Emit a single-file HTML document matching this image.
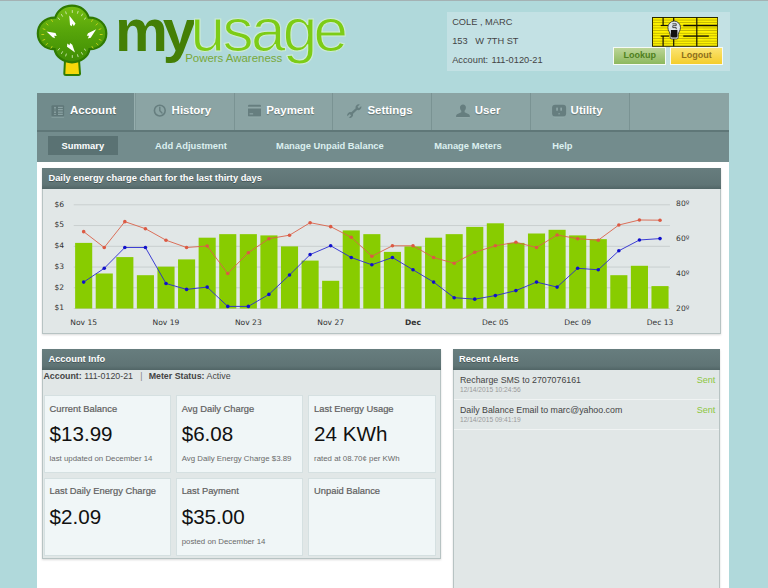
<!DOCTYPE html>
<html><head><meta charset="utf-8"><title>MyUsage</title>
<style>
*{box-sizing:border-box;margin:0;padding:0}
html,body{width:768px;height:588px;overflow:hidden}
body{background:#b0d9db;font-family:"Liberation Sans",Arial,sans-serif;color:#333;position:relative}
.abs{position:absolute}
#topbar{left:0;top:0;width:768px;height:1px;background:#a4b2b4}
#info{left:446.6px;top:11.8px;width:283px;height:59.7px;background:#c3e1e4}
#info div{position:absolute;left:5.6px;font-size:9.25px;color:#444;white-space:pre;line-height:12px}
.btn{position:absolute;top:47.4px;height:18.1px;border:1.5px solid #f6faf6;font-size:9px;font-weight:bold;text-align:center;line-height:15.2px}
#nav{left:37.3px;top:93.3px;width:691.9px;height:36.9px;background:#8ba4a4}
.tab{position:absolute;top:0;height:36.9px;border-right:1px solid #7a9393;color:#fff;font-weight:bold;font-size:11.5px;line-height:35.4px;text-shadow:0 1px 1px rgba(0,0,0,.3)}
.tab span{position:absolute;top:0}
.tab svg{position:absolute}
#sub{left:37.3px;top:130.2px;width:691.9px;height:31.5px;background:#738c8d;border-top:2px solid #5f7778}
#sub span{position:absolute;top:3.8px;height:19.5px;line-height:21px;font-size:9.37px;font-weight:bold;color:#dcf0f0;white-space:nowrap}
#main{left:37.3px;top:161.7px;width:691.9px;height:440px;background:#fff}
.panel{position:absolute;background:#e1e7e7;border:1px solid #b7c3c3;box-shadow:0 1px 2px rgba(0,0,0,.15)}
.ph{position:absolute;left:-1px;top:-1px;right:-1px;height:21.3px;background:linear-gradient(#677d7e,#5f7475 80%,#516566);color:#fff;font-size:9.3px;font-weight:bold;line-height:20.5px;padding-left:6px;text-shadow:0 1px 0 rgba(0,0,0,.3);white-space:nowrap}
.card{position:absolute;background:#f0f6f7;border:1px solid #d5e0e1;width:127.3px;height:77.6px}
.card .t{position:absolute;left:4.8px;top:7.5px;font-size:9.35px;color:#606060;-webkit-text-stroke:0.2px #606060;white-space:nowrap}
.card .v{position:absolute;left:4.8px;top:26px;font-size:20.6px;color:#111;white-space:nowrap;line-height:24px}
.card .s{position:absolute;left:4.8px;top:58.2px;font-size:7.85px;color:#6a6a6a;white-space:nowrap}
.al{position:absolute;left:0;right:0;height:30px;border-bottom:1px solid rgba(255,255,255,.5)}
.al .a{position:absolute;left:6px;top:5.5px;font-size:8.82px;color:#444;white-space:nowrap;line-height:11px}
.al .d{position:absolute;left:6px;top:16px;font-size:6.62px;color:#999;white-space:nowrap;line-height:8px}
.al .r{position:absolute;right:4px;top:5.5px;font-size:9px;color:#8cc63e;line-height:11px}
</style></head><body>
<div class="abs" id="topbar"></div>
<svg class="abs" style="left:0;top:0" width="400" height="90" viewBox="0 0 400 90">
<defs>
<linearGradient id="tg" x1="0" y1="0" x2="0" y2="1"><stop offset="0" stop-color="#74bd12"/><stop offset="0.45" stop-color="#57a50a"/><stop offset="1" stop-color="#3f8d04"/></linearGradient>
</defs>
<g>
<path d="M65 60 L64.3 73.5 Q64.3 75 66 75 L78.5 75 Q80.2 75 80 73.5 L79 60 Z" fill="#f6d80a" stroke="#327c02" stroke-width="2" stroke-linejoin="round"/>
<g fill="url(#tg)" stroke="#2f7a02" stroke-width="2.2">
<path d="M72 5.6 C80.5 5.6 87 11 88.6 17.6 C99 17.2 106.3 24.5 106.3 33.5 C106.300 43 98.500 49.500 89.500 49.200 C88.500 56.500 81 62.300 72 62.300 C63 62.300 55.800 56.500 54.600 49.200 C45.500 49.500 37.800 43 37.800 33.500 C37.800 24.500 45 17.200 55.400 17.600 C57 11 63.500 5.600 72 5.600 Z"/>
</g>
<g stroke="#e6f3d2" stroke-width="0.9" stroke-linecap="round" opacity="0.85">
<path d="M59.5 19.5l-1.3-1.6M62.500 16.300l-1-1.800M66.300 13.800l-.6-2M72.300 12.500v-2M77.500 13.300l.6-2M81.500 15.800l1-1.800M84.300 19.300l1.500-1.400"/>
<path d="M59.5 48.500l-1.300 1.600M62.500 51.700l-1 1.800M66.300 54l-.6 2M72.300 55.500v2M77.500 54.700l.6 2M81.500 52.500l1 1.800M84.300 49l1.500 1.400"/>
</g>
<g stroke="#e2dc20" stroke-width="0.9" stroke-linecap="round" opacity="0.85">
<path d="M52.500 21.500l-1.200-1.800M48 25l-1.500-1.300M45 29.500l-1.900-.7M43.800 34.500h-2M44.800 39.500l-1.900.7M47.500 43.500l-1.500 1.300M52 46.500l-1 1.700"/>
<path d="M91.500 21.500l1.200-1.800M96 25l1.500-1.300M99 29.500l1.900-.7M100.200 34.500h2M99.200 39.500l1.900.7M96.500 43.500l1.500 1.300M92 46.500l1 1.700"/>
</g>
<g fill="#fff">
<path d="M69.300 15.500 L75.500 23.500 L73.800 26.200 L72.600 23.800 L71.600 26.200 L70 25 Z"/>
<path d="M46.500 31.500 L55.500 33 L56.700 36 L54.200 35.800 L55 38.200 L52.500 37.200 Z"/>
<path d="M96.200 29.300 L90.700 37.800 L87.800 38.500 L89 35.800 L86.800 35.800 L88 33.300 Z"/>
<path d="M75 52.500 L67 46.800 L67.300 43.500 L69.500 45.300 L70 43 L72.300 44.800 Z"/>
</g>
</g>
<text x="114.9" y="50.6" font-family="'Liberation Sans',Arial,sans-serif" font-weight="bold" font-size="59.5" fill="#447f06" letter-spacing="-5">my</text>
<text x="190.6" y="51" font-family="'Liberation Sans',Arial,sans-serif" font-size="62" fill="#7dcc16" stroke="#cdebd6" stroke-width="1.1" paint-order="fill" letter-spacing="-2.6" dx="0 0 0 0 -1.2">usage</text>
<text x="185.2" y="61.6" font-family="'Liberation Sans',Arial,sans-serif" font-size="11" fill="#78a83a" textLength="97" lengthAdjust="spacingAndGlyphs">Powers Awareness</text>
</svg>

<div class="abs" id="info">
<div style="top:4px">COLE , MARC</div>
<div style="top:23px">153   W 7TH ST</div>
<div style="top:42px;word-spacing:0.7px">Account: 111-0120-21</div>
</div>
<svg class="abs" style="left:651.8px;top:17px" width="66.2" height="29.8" viewBox="0 0 66.2 29.8">
<rect x="0.5" y="0.5" width="65.2" height="28.8" fill="#f9ee00" stroke="#2a2800" stroke-width="1"/>
<text x="1" y="27.5" font-family="'Liberation Sans',Arial,sans-serif" font-weight="bold" font-size="36" fill="#fff400" textLength="64" lengthAdjust="spacingAndGlyphs">KES</text>
<rect x="0.8" y="2.69" width="64.60000000000001" height="0.7" fill="#9c9000" opacity="0.8"/>
<rect x="0.8" y="5.32" width="64.60000000000001" height="0.7" fill="#9c9000" opacity="0.8"/>
<rect x="0.8" y="7.96" width="64.60000000000001" height="0.7" fill="#9c9000" opacity="0.8"/>
<rect x="0.8" y="10.60" width="64.60000000000001" height="0.7" fill="#9c9000" opacity="0.8"/>
<rect x="0.8" y="13.23" width="64.60000000000001" height="0.7" fill="#9c9000" opacity="0.8"/>
<rect x="0.8" y="15.87" width="64.60000000000001" height="0.7" fill="#9c9000" opacity="0.8"/>
<rect x="0.8" y="18.50" width="64.60000000000001" height="0.7" fill="#9c9000" opacity="0.8"/>
<rect x="0.8" y="21.14" width="64.60000000000001" height="0.7" fill="#9c9000" opacity="0.8"/>
<rect x="0.8" y="23.78" width="64.60000000000001" height="0.7" fill="#9c9000" opacity="0.8"/>
<rect x="0.8" y="26.41" width="64.60000000000001" height="0.7" fill="#9c9000" opacity="0.8"/>
<line x1="11.1" y1="0.5" x2="11.1" y2="8.5" stroke="#141200" stroke-width="1.2"/>
<line x1="11.1" y1="19.1" x2="11.1" y2="29.3" stroke="#141200" stroke-width="1.2"/>
<line x1="8.7" y1="8.5" x2="16" y2="8.5" stroke="#141200" stroke-width="1.2"/>
<line x1="8.7" y1="19.1" x2="17" y2="19.1" stroke="#141200" stroke-width="1.2"/>
<line x1="21.7" y1="0.5" x2="21.7" y2="4.6" stroke="#141200" stroke-width="1.2"/>
<line x1="21.7" y1="21.5" x2="21.7" y2="29.3" stroke="#141200" stroke-width="1.2"/>
<line x1="31.3" y1="8.5" x2="65.5" y2="8.5" stroke="#141200" stroke-width="1.3"/>
<line x1="31.3" y1="19.1" x2="56.8" y2="19.1" stroke="#141200" stroke-width="1.3"/>
<line x1="44.8" y1="0.5" x2="44.8" y2="29.3" stroke="#141200" stroke-width="1.2"/>
<path d="M22.200 4.100a6.300 6.300 0 0 1 6.300 6.300c0 3.200-2 4.500-2.300 7.500v2.500q0 1.600-1.600 1.600h-4.800q-1.600 0-1.600-1.600v-2.500c-.3-3-2.300-4.300-2.300-7.500a6.300 6.300 0 0 1 6.300-6.300z" fill="#dde5ea" stroke="#2a2a2a" stroke-width="0.8"/>
<path d="M18.900 12.900h6.500v6q0 1.700-1.600 1.700h-3.300q-1.600 0-1.600-1.700z" fill="#111"/>
<path d="M20.400 6.800h3.800v1.900h-3.400v1.900h3.400v1.600" fill="none" stroke="#222" stroke-width="0.8"/>
</svg>
<div class="btn" style="left:613.2px;width:53.3px;background:linear-gradient(#bcd597,#8db85e);color:#4f8020">Lookup</div>
<div class="btn" style="left:669.6px;width:53.6px;background:linear-gradient(#fbe472,#f4cd2c);color:#8d6f1c">Logout</div>
<div class="abs" id="nav">
 <div class="tab" style="left:0;width:98px;background:#718b8c;border-right:1.2px solid #96aeae"><span style="left:32.7px">Account</span></div>
 <div class="tab" style="left:98px;width:99.7px;border-left:1px solid #7f9898"><span style="left:35.3px">History</span></div>
 <div class="tab" style="left:197.7px;width:98.1px"><span style="left:31.2px">Payment</span></div>
 <div class="tab" style="left:295.8px;width:98.7px"><span style="left:34.3px">Settings</span></div>
 <div class="tab" style="left:394.5px;width:98.9px"><span style="left:43px">User</span></div>
 <div class="tab" style="left:493.4px;width:99.2px"><span style="left:39.9px">Utility</span></div>
</div>
<svg class="abs" style="left:0;top:0;pointer-events:none" width="768" height="135" viewBox="0 0 768 135">
<g fill="#5f7778">
<rect x="51.500" y="105.200" width="12.600" height="11.300" rx="1"/>
</g>
<rect x="51.500" y="116.800" width="12.600" height="0.800" fill="#8ea6a6"/>
<g fill="#8aa2a3">
<circle cx="55" cy="107.700" r="1"/><path d="M53.500 110.300q1.500-1.600 3 0z"/>
<circle cx="55" cy="112.300" r="1"/><path d="M53.500 114.900q1.500-1.600 3 0z"/>
<rect x="58" y="106.800" width="4.800" height="1.300"/><rect x="58" y="109" width="4.800" height="1.300"/>
<rect x="58" y="111.500" width="4.800" height="1.300"/><rect x="58" y="113.700" width="4.800" height="1.300"/>
</g>
<circle cx="159.800" cy="110.600" r="5.400" fill="none" stroke="#667e7f" stroke-width="1.600"/>
<path d="M159.800 107.200v3.600l2.200 2.200" fill="none" stroke="#667e7f" stroke-width="1.400" stroke-linecap="round"/>
<rect x="248" y="104.800" width="13" height="11.700" rx="1.300" fill="#667e7f"/>
<rect x="248" y="106.700" width="13" height="1.800" fill="#8fa7a7"/>
<rect x="249.500" y="113.300" width="3.600" height="1.100" fill="#8fa7a7"/>
<rect x="248.500" y="116.700" width="12" height="0.700" fill="#96adad"/>
<g transform="translate(354.300 111.100) rotate(-43) scale(0.9)">
<rect x="-5" y="-1.250" width="10" height="2.500" fill="#667e7f"/>
<circle cx="-6.300" cy="0" r="3.100" fill="#667e7f"/><circle cx="6.300" cy="0" r="3.100" fill="#667e7f"/>
<rect x="-10" y="-1.150" width="4.200" height="2.300" fill="#8ba4a4"/><rect x="5.800" y="-1.150" width="4.200" height="2.300" fill="#8ba4a4"/>
</g>
<path d="M463 104.400c1.800 0 2.900 1.300 2.900 3.100c0 1.500-.6 2.500-1.300 3.200v1.600l4.200 2c.7.400 1 1 1 1.700v.9h-13.700v-.9c0-.7.300-1.300 1-1.700l4.200-2v-1.600c-.7-.7-1.300-1.700-1.300-3.200c0-1.800 1.200-3.100 3-3.100z" fill="#667e7f"/>
<rect x="456.500" y="117.200" width="13" height="0.700" fill="#96adad"/>
<rect x="552.100" y="104.800" width="14" height="11.700" rx="3" fill="#667e7f"/>
<rect x="556.300" y="107.500" width="1.500" height="3.300" rx=".5" fill="#93abab"/>
<rect x="560.400" y="107.500" width="1.500" height="3.300" rx=".5" fill="#93abab"/>
<path d="M558.100 114.300a1 1 0 0 1 2 0z" fill="#93abab"/>
<rect x="554" y="116.800" width="10" height="0.700" fill="#96adad"/>
</svg>
<div class="abs" id="sub">
 <span style="left:10.4px;width:70.3px;background:#5a7273;text-align:center;color:#fff">Summary</span>
 <span style="left:117.7px">Add Adjustment</span>
 <span style="left:238.8px">Manage Unpaid Balance</span>
 <span style="left:396.9px">Manage Meters</span>
 <span style="left:514.9px">Help</span>
</div>
<div class="abs" id="main">
 <div class="panel" style="left:5.2px;top:6.3px;width:678.3px;height:166.2px"><div class="ph">Daily energy charge chart for the last thirty days</div></div>
 <div class="panel" style="left:5.2px;top:186.9px;width:398.3px;height:210.8px"><div class="ph">Account Info</div>
  <div class="abs" style="left:0px;top:21.6px;font-size:8.84px;color:#444;white-space:pre;line-height:11px"><b>Account:</b> 111-0120-21   <span style="color:#888">|</span>  <b style="margin-left:1.1px">Meter Status:</b> Active</div>
  <div class="card" style="left:0.3px;top:45.6px"><div class="t">Current Balance</div><div class="v">$13.99</div><div class="s">last updated on December 14</div></div>
  <div class="card" style="left:132.4px;top:45.6px"><div class="t">Avg Daily Charge</div><div class="v">$6.08</div><div class="s">Avg Daily Energy Charge $3.89</div></div>
  <div class="card" style="left:264.8px;top:45.6px"><div class="t">Last Energy Usage</div><div class="v">24 KWh</div><div class="s">rated at 08.70¢ per KWh</div></div>
  <div class="card" style="left:0.3px;top:128.4px"><div class="t">Last Daily Energy Charge</div><div class="v">$2.09</div></div>
  <div class="card" style="left:132.4px;top:128.4px"><div class="t">Last Payment</div><div class="v">$35.00</div><div class="s">posted on December 14</div></div>
  <div class="card" style="left:264.8px;top:128.4px"><div class="t">Unpaid Balance</div></div>
 </div>
 <div class="panel" style="left:415.7px;top:186.9px;width:267.3px;height:260px"><div class="ph">Recent Alerts</div>
  <div class="al" style="top:20px;height:30.2px"><div class="a">Recharge SMS to 2707076161</div><div class="d">12/14/2015 10:24:56</div><div class="r">Sent</div></div>
  <div class="al" style="top:50.1px;height:30.1px"><div class="a">Daily Balance Email to marc@yahoo.com</div><div class="d">12/14/2015 09:41:19</div><div class="r">Sent</div></div>
 </div>
</div>
<svg class="abs" style="left:42.5px;top:188.6px" width="678" height="141.4" viewBox="0 0 678 141.4" font-family="'DejaVu Sans',Verdana,sans-serif" font-size="7.6" fill="#333">
<rect x="30.7" y="15.30" width="596.3" height="1" fill="#c9cfcf"/>
<rect x="30.7" y="36.05" width="596.3" height="1" fill="#c9cfcf"/>
<rect x="30.7" y="56.80" width="596.3" height="1" fill="#c9cfcf"/>
<rect x="30.7" y="77.55" width="596.3" height="1" fill="#c9cfcf"/>
<rect x="30.7" y="98.30" width="596.3" height="1" fill="#c9cfcf"/>
<rect x="30.7" y="119.05" width="596.3" height="1" fill="#c9cfcf"/>
<rect x="32.1" y="53.9" width="17.1" height="65.65" fill="#88cc00"/>
<rect x="52.69" y="84.5" width="17.1" height="35.05" fill="#88cc00"/>
<rect x="73.27" y="68.1" width="17.1" height="51.45" fill="#88cc00"/>
<rect x="93.85" y="86.2" width="17.1" height="33.35" fill="#88cc00"/>
<rect x="114.44" y="77.65" width="17.1" height="41.90" fill="#88cc00"/>
<rect x="135.03" y="70.4" width="17.1" height="49.15" fill="#88cc00"/>
<rect x="155.61" y="48.7" width="17.1" height="70.85" fill="#88cc00"/>
<rect x="176.19" y="45.15" width="17.1" height="74.40" fill="#88cc00"/>
<rect x="196.78" y="45.15" width="17.1" height="74.40" fill="#88cc00"/>
<rect x="217.37" y="46.4" width="17.1" height="73.15" fill="#88cc00"/>
<rect x="237.95" y="57.4" width="17.1" height="62.15" fill="#88cc00"/>
<rect x="258.54" y="71.6" width="17.1" height="47.95" fill="#88cc00"/>
<rect x="279.12" y="91.8" width="17.1" height="27.75" fill="#88cc00"/>
<rect x="299.7" y="41.4" width="17.1" height="78.15" fill="#88cc00"/>
<rect x="320.29" y="45.15" width="17.1" height="74.40" fill="#88cc00"/>
<rect x="340.88" y="62.9" width="17.1" height="56.65" fill="#88cc00"/>
<rect x="361.46" y="57.4" width="17.1" height="62.15" fill="#88cc00"/>
<rect x="382.05" y="48.7" width="17.1" height="70.85" fill="#88cc00"/>
<rect x="402.63" y="45.15" width="17.1" height="74.40" fill="#88cc00"/>
<rect x="423.21" y="37.9" width="17.1" height="81.65" fill="#88cc00"/>
<rect x="443.8" y="34.3" width="17.1" height="85.25" fill="#88cc00"/>
<rect x="464.39" y="53.9" width="17.1" height="65.65" fill="#88cc00"/>
<rect x="484.97" y="44.5" width="17.1" height="75.05" fill="#88cc00"/>
<rect x="505.56" y="40.8" width="17.1" height="78.75" fill="#88cc00"/>
<rect x="526.14" y="46.4" width="17.1" height="73.15" fill="#88cc00"/>
<rect x="546.73" y="50.15" width="17.1" height="69.40" fill="#88cc00"/>
<rect x="567.31" y="86.2" width="17.1" height="33.35" fill="#88cc00"/>
<rect x="587.9" y="76.8" width="17.1" height="42.75" fill="#88cc00"/>
<rect x="608.48" y="97.1" width="17.1" height="22.45" fill="#88cc00"/>
<polyline points="40.65,42.65 61.24,58.5 81.82,32.65 102.41,39.7 122.99,51.2 143.58,58.5 164.16,57.0 184.75,84.5 205.33,63.7 225.92,49.7 246.5,46.2 267.09,33.7 287.67,37.65 308.25,48.3 328.84,67.2 349.43,56.8 370.01,56.8 390.6,68.5 411.18,74.3 431.76,63.3 452.35,56.8 472.94,53.3 493.52,58.5 514.11,46.0 534.69,49.7 555.27,51.2 575.86,36.0 596.45,31.0 617.03,31.2" fill="none" stroke="#d9624a" stroke-width="0.9"/>
<circle cx="40.65" cy="42.65" r="1.8" fill="#dc5a44"/>
<circle cx="61.24" cy="58.5" r="1.8" fill="#dc5a44"/>
<circle cx="81.82" cy="32.65" r="1.8" fill="#dc5a44"/>
<circle cx="102.41" cy="39.7" r="1.8" fill="#dc5a44"/>
<circle cx="122.99" cy="51.2" r="1.8" fill="#dc5a44"/>
<circle cx="143.58" cy="58.5" r="1.8" fill="#dc5a44"/>
<circle cx="164.16" cy="57.0" r="1.8" fill="#dc5a44"/>
<circle cx="184.75" cy="84.5" r="1.8" fill="#dc5a44"/>
<circle cx="205.33" cy="63.7" r="1.8" fill="#dc5a44"/>
<circle cx="225.92" cy="49.7" r="1.8" fill="#dc5a44"/>
<circle cx="246.5" cy="46.2" r="1.8" fill="#dc5a44"/>
<circle cx="267.09" cy="33.7" r="1.8" fill="#dc5a44"/>
<circle cx="287.67" cy="37.65" r="1.8" fill="#dc5a44"/>
<circle cx="308.25" cy="48.3" r="1.8" fill="#dc5a44"/>
<circle cx="328.84" cy="67.2" r="1.8" fill="#dc5a44"/>
<circle cx="349.43" cy="56.8" r="1.8" fill="#dc5a44"/>
<circle cx="370.01" cy="56.8" r="1.8" fill="#dc5a44"/>
<circle cx="390.6" cy="68.5" r="1.8" fill="#dc5a44"/>
<circle cx="411.18" cy="74.3" r="1.8" fill="#dc5a44"/>
<circle cx="431.76" cy="63.3" r="1.8" fill="#dc5a44"/>
<circle cx="452.35" cy="56.8" r="1.8" fill="#dc5a44"/>
<circle cx="472.94" cy="53.3" r="1.8" fill="#dc5a44"/>
<circle cx="493.52" cy="58.5" r="1.8" fill="#dc5a44"/>
<circle cx="514.11" cy="46.0" r="1.8" fill="#dc5a44"/>
<circle cx="534.69" cy="49.7" r="1.8" fill="#dc5a44"/>
<circle cx="555.27" cy="51.2" r="1.8" fill="#dc5a44"/>
<circle cx="575.86" cy="36.0" r="1.8" fill="#dc5a44"/>
<circle cx="596.45" cy="31.0" r="1.8" fill="#dc5a44"/>
<circle cx="617.03" cy="31.2" r="1.8" fill="#dc5a44"/>
<polyline points="40.65,93.1 61.24,79.3 81.82,58.5 102.41,58.5 122.99,94.5 143.58,100.4 164.16,98.1 184.75,117.4 205.33,117.4 225.92,105.4 246.5,86.0 267.09,65.6 287.67,56.8 308.25,68.5 328.84,75.8 349.43,68.5 370.01,80.8 390.6,93.1 411.18,108.7 431.76,110.15 452.35,106.6 472.94,101.6 493.52,93.1 514.11,98.1 534.69,79.3 555.27,80.8 575.86,61.8 596.45,51.0 617.03,49.6" fill="none" stroke="#2a2ad0" stroke-width="0.9"/>
<circle cx="40.65" cy="93.1" r="1.8" fill="#1111cc"/>
<circle cx="61.24" cy="79.3" r="1.8" fill="#1111cc"/>
<circle cx="81.82" cy="58.5" r="1.8" fill="#1111cc"/>
<circle cx="102.41" cy="58.5" r="1.8" fill="#1111cc"/>
<circle cx="122.99" cy="94.5" r="1.8" fill="#1111cc"/>
<circle cx="143.58" cy="100.4" r="1.8" fill="#1111cc"/>
<circle cx="164.16" cy="98.1" r="1.8" fill="#1111cc"/>
<circle cx="184.75" cy="117.4" r="1.8" fill="#1111cc"/>
<circle cx="205.33" cy="117.4" r="1.8" fill="#1111cc"/>
<circle cx="225.92" cy="105.4" r="1.8" fill="#1111cc"/>
<circle cx="246.5" cy="86.0" r="1.8" fill="#1111cc"/>
<circle cx="267.09" cy="65.6" r="1.8" fill="#1111cc"/>
<circle cx="287.67" cy="56.8" r="1.8" fill="#1111cc"/>
<circle cx="308.25" cy="68.5" r="1.8" fill="#1111cc"/>
<circle cx="328.84" cy="75.8" r="1.8" fill="#1111cc"/>
<circle cx="349.43" cy="68.5" r="1.8" fill="#1111cc"/>
<circle cx="370.01" cy="80.8" r="1.8" fill="#1111cc"/>
<circle cx="390.6" cy="93.1" r="1.8" fill="#1111cc"/>
<circle cx="411.18" cy="108.7" r="1.8" fill="#1111cc"/>
<circle cx="431.76" cy="110.15" r="1.8" fill="#1111cc"/>
<circle cx="452.35" cy="106.6" r="1.8" fill="#1111cc"/>
<circle cx="472.94" cy="101.6" r="1.8" fill="#1111cc"/>
<circle cx="493.52" cy="93.1" r="1.8" fill="#1111cc"/>
<circle cx="514.11" cy="98.1" r="1.8" fill="#1111cc"/>
<circle cx="534.69" cy="79.3" r="1.8" fill="#1111cc"/>
<circle cx="555.27" cy="80.8" r="1.8" fill="#1111cc"/>
<circle cx="575.86" cy="61.8" r="1.8" fill="#1111cc"/>
<circle cx="596.45" cy="51.0" r="1.8" fill="#1111cc"/>
<circle cx="617.03" cy="49.6" r="1.8" fill="#1111cc"/>
<text x="11.5" y="17.70">$6</text>
<text x="11.5" y="38.45">$5</text>
<text x="11.5" y="59.20">$4</text>
<text x="11.5" y="79.95">$3</text>
<text x="11.5" y="100.70">$2</text>
<text x="11.5" y="121.45">$1</text>
<text x="633.1" y="17.30">80º</text>
<text x="633.1" y="52.10">60º</text>
<text x="633.1" y="86.90">40º</text>
<text x="633.1" y="121.70">20º</text>
<text x="40.65" y="136.1" text-anchor="middle">Nov 15</text>
<text x="122.99" y="136.1" text-anchor="middle">Nov 19</text>
<text x="205.33" y="136.1" text-anchor="middle">Nov 23</text>
<text x="287.67" y="136.1" text-anchor="middle">Nov 27</text>
<text x="370.01" y="136.1" text-anchor="middle" font-weight="bold">Dec</text>
<text x="452.35" y="136.1" text-anchor="middle">Dec 05</text>
<text x="534.69" y="136.1" text-anchor="middle">Dec 09</text>
<text x="617.03" y="136.1" text-anchor="middle">Dec 13</text>
</svg>
</body></html>
